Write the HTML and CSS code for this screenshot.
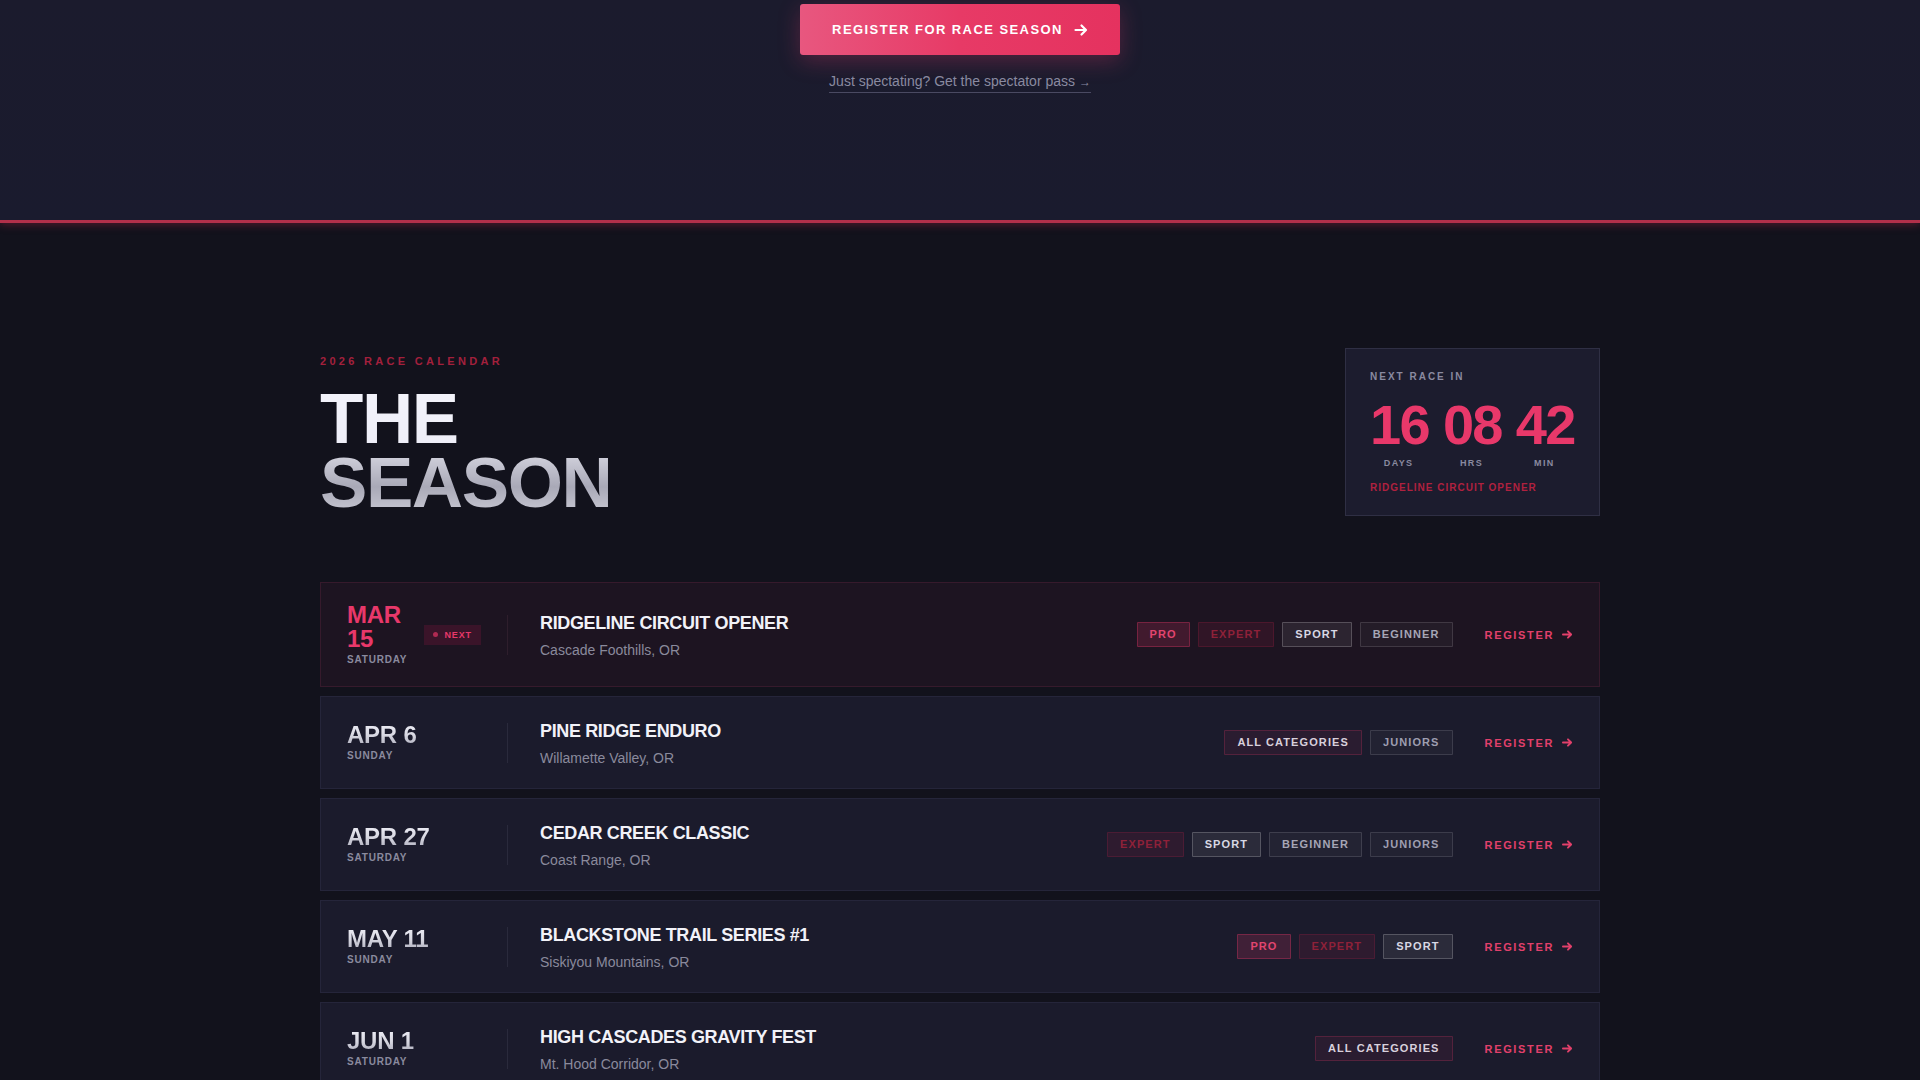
FILE: index.html
```html
<!DOCTYPE html>
<html lang="en">
<head>
<meta charset="utf-8">
<title>2026 Race Calendar</title>
<link rel="stylesheet" href="styles.css">
</head>
<body>
<header class="hero">
  <a class="cta" href="#">REGISTER FOR RACE SEASON
    <svg class="cta-arrow" viewBox="0 0 14 14" width="14" height="14"><path d="M1.5 7h10M7.5 2.5L12 7l-4.5 4.5" fill="none" stroke="#fff" stroke-width="2.2" stroke-linecap="round" stroke-linejoin="round"/></svg>
  </a>
  <a class="spectator" href="#">Just spectating? Get the spectator pass <span class="sp-arrow">→</span></a>
</header>

<main class="season">
  <div class="container">
    <div class="season-head">
      <div class="season-title">
        <div class="eyebrow">2026 RACE CALENDAR</div>
        <h1 class="title"><span class="title-line">THE</span><span class="title-line">SEASON</span></h1>
      </div>
      <aside class="countdown">
        <div class="cd-label">NEXT RACE IN</div>
        <div class="cd-units">
          <div class="cd-unit"><span class="cd-num">16</span><span class="cd-cap">DAYS</span></div>
          <div class="cd-unit"><span class="cd-num">08</span><span class="cd-cap">HRS</span></div>
          <div class="cd-unit"><span class="cd-num">42</span><span class="cd-cap">MIN</span></div>
        </div>
        <div class="cd-event">RIDGELINE CIRCUIT OPENER</div>
      </aside>
    </div>

    <div class="races">
      <div class="race race-next">
        <div class="race-date">
          <div class="date-block">
            <div class="date date-hot">MAR 15</div>
            <div class="day">SATURDAY</div>
          </div>
          <span class="badge"><span class="badge-dot"></span>NEXT</span>
        </div>
        <div class="divider"></div>
        <div class="race-info">
          <div class="race-name">RIDGELINE CIRCUIT OPENER</div>
          <div class="race-loc">Cascade Foothills, OR</div>
        </div>
        <div class="tags">
          <span class="tag tag-pro">PRO</span>
          <span class="tag tag-expert">EXPERT</span>
          <span class="tag tag-sport">SPORT</span>
          <span class="tag tag-beginner">BEGINNER</span>
        </div>
        <a class="register" href="#">REGISTER <svg viewBox="0 0 12 12" width="11" height="11"><path d="M1 6h9M6.5 2.5L10 6l-3.5 3.5" fill="none" stroke="currentColor" stroke-width="2" stroke-linecap="round" stroke-linejoin="round"/></svg></a>
      </div>

      <div class="race">
        <div class="race-date">
          <div class="date-block">
            <div class="date">APR 6</div>
            <div class="day">SUNDAY</div>
          </div>
        </div>
        <div class="divider"></div>
        <div class="race-info">
          <div class="race-name">PINE RIDGE ENDURO</div>
          <div class="race-loc">Willamette Valley, OR</div>
        </div>
        <div class="tags">
          <span class="tag tag-all">ALL CATEGORIES</span>
          <span class="tag tag-juniors">JUNIORS</span>
        </div>
        <a class="register" href="#">REGISTER <svg viewBox="0 0 12 12" width="11" height="11"><path d="M1 6h9M6.5 2.5L10 6l-3.5 3.5" fill="none" stroke="currentColor" stroke-width="2" stroke-linecap="round" stroke-linejoin="round"/></svg></a>
      </div>

      <div class="race">
        <div class="race-date">
          <div class="date-block">
            <div class="date">APR 27</div>
            <div class="day">SATURDAY</div>
          </div>
        </div>
        <div class="divider"></div>
        <div class="race-info">
          <div class="race-name">CEDAR CREEK CLASSIC</div>
          <div class="race-loc">Coast Range, OR</div>
        </div>
        <div class="tags">
          <span class="tag tag-expert">EXPERT</span>
          <span class="tag tag-sport">SPORT</span>
          <span class="tag tag-beginner">BEGINNER</span>
          <span class="tag tag-juniors">JUNIORS</span>
        </div>
        <a class="register" href="#">REGISTER <svg viewBox="0 0 12 12" width="11" height="11"><path d="M1 6h9M6.5 2.5L10 6l-3.5 3.5" fill="none" stroke="currentColor" stroke-width="2" stroke-linecap="round" stroke-linejoin="round"/></svg></a>
      </div>

      <div class="race">
        <div class="race-date">
          <div class="date-block">
            <div class="date">MAY 11</div>
            <div class="day">SUNDAY</div>
          </div>
        </div>
        <div class="divider"></div>
        <div class="race-info">
          <div class="race-name">BLACKSTONE TRAIL SERIES #1</div>
          <div class="race-loc">Siskiyou Mountains, OR</div>
        </div>
        <div class="tags">
          <span class="tag tag-pro">PRO</span>
          <span class="tag tag-expert">EXPERT</span>
          <span class="tag tag-sport">SPORT</span>
        </div>
        <a class="register" href="#">REGISTER <svg viewBox="0 0 12 12" width="11" height="11"><path d="M1 6h9M6.5 2.5L10 6l-3.5 3.5" fill="none" stroke="currentColor" stroke-width="2" stroke-linecap="round" stroke-linejoin="round"/></svg></a>
      </div>

      <div class="race">
        <div class="race-date">
          <div class="date-block">
            <div class="date">JUN 1</div>
            <div class="day">SATURDAY</div>
          </div>
        </div>
        <div class="divider"></div>
        <div class="race-info">
          <div class="race-name">HIGH CASCADES GRAVITY FEST</div>
          <div class="race-loc">Mt. Hood Corridor, OR</div>
        </div>
        <div class="tags">
          <span class="tag tag-all">ALL CATEGORIES</span>
        </div>
        <a class="register" href="#">REGISTER <svg viewBox="0 0 12 12" width="11" height="11"><path d="M1 6h9M6.5 2.5L10 6l-3.5 3.5" fill="none" stroke="currentColor" stroke-width="2" stroke-linecap="round" stroke-linejoin="round"/></svg></a>
      </div>
    </div>
  </div>
</main>
</body>
</html>
```

FILE: styles.css
```css
* { box-sizing: border-box; }

html, body {
  margin: 0;
  padding: 0;
}

body {
  background: #12121c;
  font-family: "Liberation Sans", Arial, sans-serif;
  color: #e8e8f0;
}

a { text-decoration: none; }

/* ---------- hero ---------- */
.hero {
  height: 223px;
  padding-top: 4px;
  background: linear-gradient(180deg, #1b1b2d 0%, #1a1b2e 100%);
  border-bottom: 3px solid #b2304a;
  box-shadow: 0 2px 8px rgba(190, 40, 70, 0.35);
  display: flex;
  flex-direction: column;
  align-items: center;
}

.cta {
  width: 320px;
  height: 51px;
  border-radius: 3px;
  background: linear-gradient(90deg, #e8577f 0%, #e73a66 50%, #e5325f 100%);
  box-shadow: 0 6px 22px rgba(232, 56, 106, 0.28);
  color: #fff;
  font-weight: 700;
  font-size: 13px;
  letter-spacing: 0.11em;
  display: flex;
  align-items: center;
  justify-content: center;
  gap: 11px;
}

.cta-arrow { display: block; }

.spectator {
  margin-top: 17px;
  font-size: 14px;
  line-height: 19px;
  color: #8a8aa0;
  border-bottom: 1px solid #4a4a62;
}

.sp-arrow { font-size: 12px; }

/* ---------- season ---------- */
.season {
  padding-top: 125px;
}

.container {
  width: 1280px;
  margin: 0 auto;
}

.season-head {
  display: flex;
  justify-content: space-between;
  align-items: flex-start;
}

.season-title { padding-top: 7px; }

.eyebrow {
  font-size: 11px;
  line-height: 13px;
  font-weight: 700;
  letter-spacing: 0.3em;
  color: #a3203c;
}

.title {
  margin: 19px 0 0;
  font-size: 71px;
  line-height: 0.9;
  font-weight: 700;
  letter-spacing: -0.02em;
  background: linear-gradient(180deg, #f4f4fb 0%, #eeeef8 46%, #cfcfda 54%, #a9a9b7 78%, #c9c9d4 100%);
  -webkit-background-clip: text;
  background-clip: text;
  color: transparent;
}

.title-line { display: block; }

/* ---------- countdown ---------- */
.countdown {
  width: 255px;
  height: 168px;
  background: #1c1c2e;
  border: 1px solid #2f2f44;
  padding: 22px 26px 22px 24px;
}

.cd-label {
  font-size: 10px;
  line-height: 12px;
  font-weight: 700;
  letter-spacing: 0.2em;
  color: #8a8aa0;
}

.cd-units {
  margin-top: 14px;
  display: flex;
  justify-content: space-between;
}

.cd-unit {
  display: flex;
  flex-direction: column;
  align-items: center;
}

.cd-num {
  font-size: 56px;
  line-height: 1;
  font-weight: 700;
  letter-spacing: -0.03em;
  color: #e8386a;
  margin-right: -1.7px;
}

.cd-cap {
  margin-top: 5px;
  font-size: 9px;
  line-height: 11px;
  font-weight: 700;
  letter-spacing: 0.15em;
  color: #8a8aa0;
}

.cd-event {
  margin-top: 13px;
  font-size: 10px;
  line-height: 12px;
  font-weight: 700;
  letter-spacing: 0.1em;
  color: #b0213f;
}

/* ---------- race list ---------- */
.races {
  margin-top: 66px;
  display: flex;
  flex-direction: column;
  gap: 9px;
}

.race {
  display: flex;
  align-items: center;
  padding: 22px 26px;
  background: #1b1b2c;
  border: 1px solid #25253a;
}

.race-next {
  background: #1d1421;
  border-color: #361a2c;
  padding-top: 20px;
  padding-bottom: 20px;
}

.race-date {
  flex: 0 0 134px;
  display: flex;
  align-items: center;
  gap: 10px;
}

.date-block { flex: 1 1 auto; min-width: 0; }

.date {
  font-size: 24px;
  line-height: 24px;
  font-weight: 700;
  letter-spacing: -0.01em;
  background: linear-gradient(180deg, #eeeef6 0%, #d8d8e2 50%, #adadbb 100%);
  -webkit-background-clip: text;
  background-clip: text;
  color: transparent;
}

.date-hot {
  background: none;
  color: #e8386a;
}

.day {
  margin-top: 3px;
  font-size: 10px;
  line-height: 12px;
  font-weight: 700;
  letter-spacing: 0.08em;
  color: #8a8a9e;
}

.badge {
  flex: 0 0 auto;
  display: inline-flex;
  align-items: center;
  gap: 6px;
  height: 20px;
  padding: 0 9px;
  background: #3a1429;
  color: #e8386a;
  font-size: 9px;
  font-weight: 700;
  letter-spacing: 0.1em;
}

.badge-dot {
  width: 5px;
  height: 5px;
  border-radius: 50%;
  background: #b02a52;
}

.divider {
  flex: 0 0 1px;
  height: 40px;
  margin: 0 32px 0 26px;
  background: #2a2a3c;
}

.race-next .divider { background: #2e1e2c; }

.race-info {
  flex: 1 1 auto;
  min-width: 0;
}

.race-name {
  font-size: 18px;
  line-height: 24px;
  font-weight: 700;
  letter-spacing: -0.02em;
  color: #f2f2f8;
}

.race-loc {
  margin-top: 8px;
  font-size: 14px;
  line-height: 15px;
  color: #8a8a9c;
}

.tags {
  display: flex;
  gap: 8px;
  margin-right: 32px;
}

.tag {
  display: inline-block;
  padding: 5px 12px;
  font-size: 11px;
  line-height: 13px;
  font-weight: 700;
  letter-spacing: 0.1em;
  border: 1px solid transparent;
  border-radius: 1px;
}

.tag-pro {
  background: rgba(232, 56, 106, 0.18);
  border-color: rgba(232, 56, 106, 0.32);
  color: #e2456f;
}

.tag-expert {
  background: rgba(190, 30, 70, 0.12);
  border-color: rgba(190, 30, 70, 0.2);
  color: #8e2139;
}

.tag-sport {
  background: rgba(255, 255, 255, 0.07);
  border-color: rgba(255, 255, 255, 0.2);
  color: #d8d8e4;
}

.tag-beginner {
  background: rgba(255, 255, 255, 0.035);
  border-color: rgba(255, 255, 255, 0.13);
  color: #a6a6b6;
}

.tag-juniors {
  background: rgba(255, 255, 255, 0.03);
  border-color: rgba(255, 255, 255, 0.12);
  color: #9e9eb0;
}

.tag-all {
  background: rgba(232, 56, 106, 0.08);
  border-color: rgba(232, 56, 106, 0.22);
  color: #d8d0dc;
}

.register {
  display: inline-flex;
  align-items: center;
  gap: 8px;
  font-size: 11px;
  font-weight: 700;
  letter-spacing: 0.15em;
  color: #e2406b;
}

.register svg { display: block; }
```
